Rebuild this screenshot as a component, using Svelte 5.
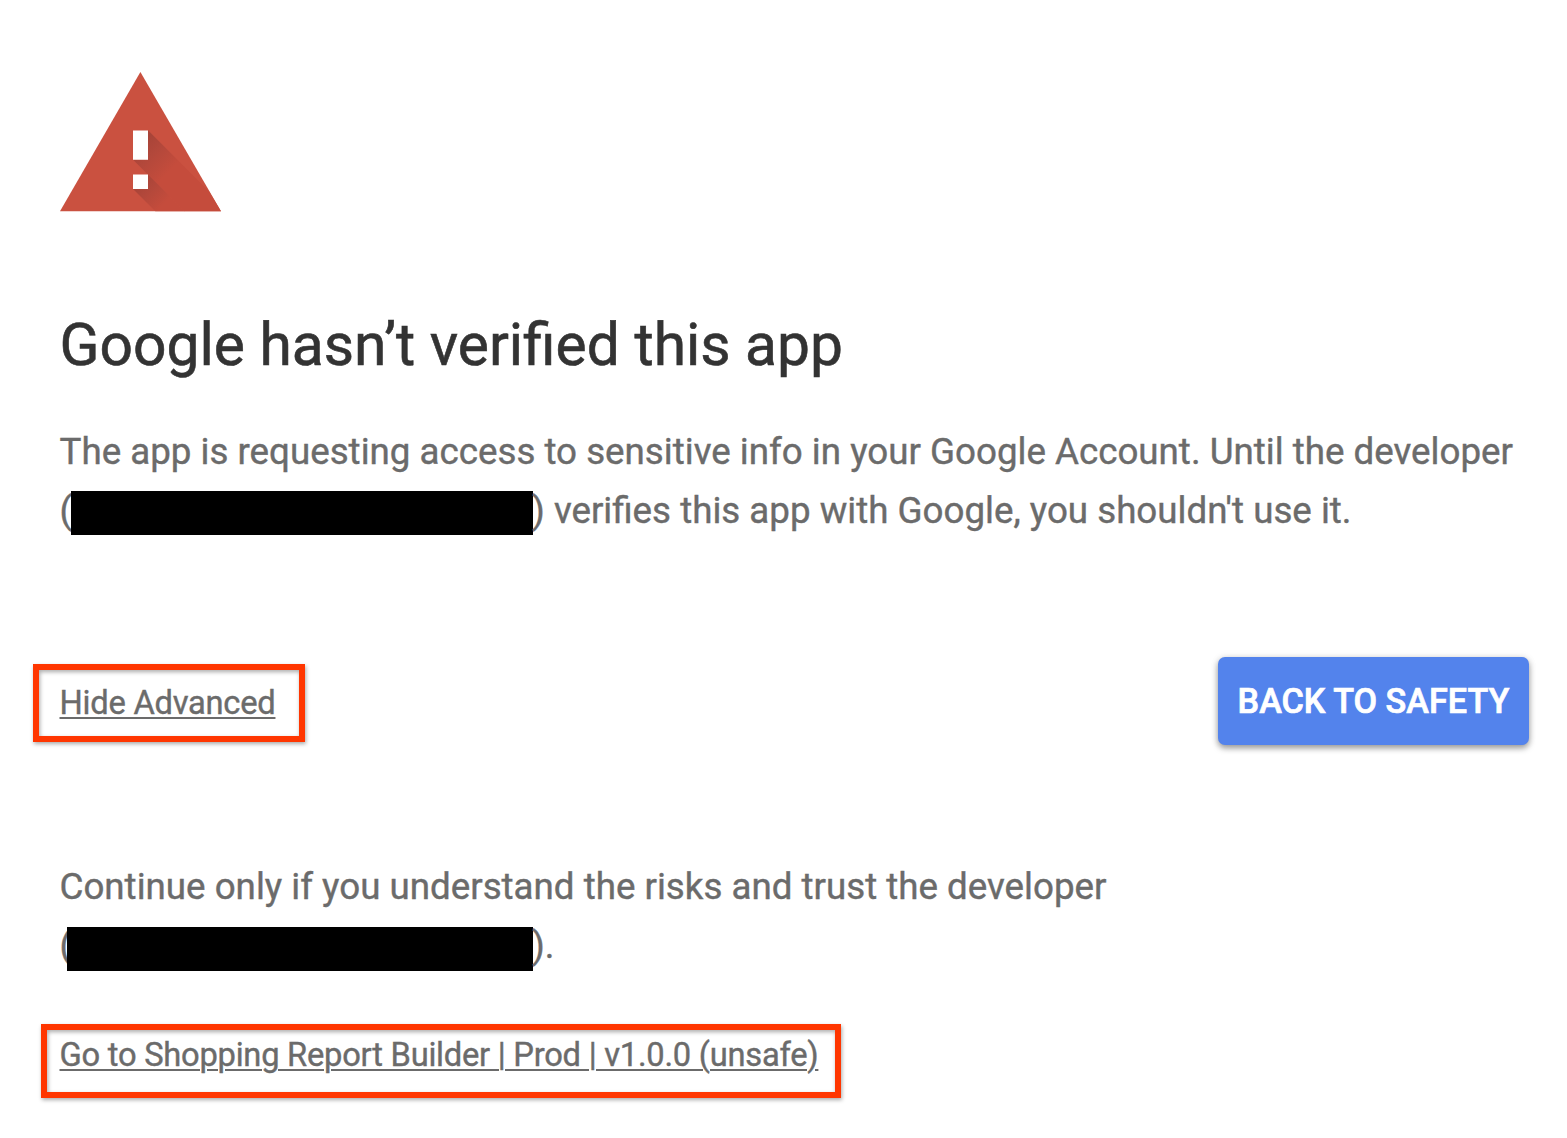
<script>
  const title = 'Google hasn’t verified this app';
</script>

<main>
  <svg class="warning" viewBox="0 0 162 140" aria-label="Warning">
    <defs>
      <linearGradient id="bar-shade" gradientUnits="userSpaceOnUse" x1="80" y1="73" x2="108" y2="101">
        <stop offset="0" stop-color="#a84438" />
        <stop offset=".4" stop-color="#b3483b" />
        <stop offset="1" stop-color="#c54c3c" />
      </linearGradient>
      <linearGradient id="dot-shade" gradientUnits="userSpaceOnUse" x1="80" y1="110" x2="103" y2="133">
        <stop offset="0" stop-color="#a84438" />
        <stop offset=".4" stop-color="#b3483b" />
        <stop offset="1" stop-color="#c54c3c" />
      </linearGradient>
    </defs>
    <path fill="#ca5140" d="M80.4 0 161 139.3H0Z" />
    <path fill="url(#bar-shade)" d="M88 58.3 149 119.3 161 139.3H124.6L73 87.7H88Z" />
    <path fill="url(#dot-shade)" d="M88 102.4 124.9 139.3H95.3L73 117H88Z" />
    <path fill="#fff" d="M73 58.4h15v29.3H73zM73 102.4h15v14.6H73z" />
  </svg>

  <h1>{title}</h1>

  <p class="intro"><span class="line">The app is requesting access to sensitive info in your Google Account. Until the developer</span><span class="line">(<span class="redacted first"></span>) verifies this app with Google, you shouldn't use it.</span></p>

  <div class="actions">
    <div class="marked toggle"><a href="#advanced">Hide Advanced</a></div>
    <button>BACK TO SAFETY</button>
  </div>

  <p class="risk"><span class="line">Continue only if you understand the risks and trust the developer</span><span class="line">(<span class="redacted second"></span>).</span></p>

  <div class="marked proceed"><a href="#proceed">Go to Shopping Report Builder | Prod | v1.0.0 (unsafe)</a></div>
</main>

<style>
  :global(body) { background: #fff; }
  main { box-sizing: border-box; width: 1567px; height: 1138px; padding: 72px 38px 0 59.5px; overflow: hidden; font-family: Roboto, sans-serif; color: #6b6b6b; -webkit-text-stroke: 0.4px currentColor; }
  .warning { display: block; width: 162px; height: 140px; }
  h1 { margin: 98px 0 0; font-size: 58.72px; line-height: 71px; font-weight: 400; color: #333; white-space: nowrap; -webkit-text-stroke-width: 0.6px; }
  p { margin: 0; font-size: 36.72px; line-height: 59px; }
  .line { display: flex; align-items: center; height: 59px; white-space: pre; }
  .intro { margin-top: 41px; }
  .redacted { height: 44px; background: #000; flex: none; }
  .first { width: 462px; margin: 5px -1px 0 -1.1px; }
  .second { width: 466px; margin: 7px -1px 0 -5.1px; }
  .actions { display: flex; justify-content: space-between; align-items: flex-start; margin-top: 117px; }
  .marked { box-sizing: border-box; border: 6px solid #ff3600; box-shadow: 1px 2px 4px #0005, inset 1px 2px 4px #0005; white-space: nowrap; }
  .toggle { width: 272px; height: 78px; margin: 7px 0 0 -26.5px; padding: 13px 0 0 20.5px; }
  a { color: inherit; font-size: 32.7px; letter-spacing: -0.25px; line-height: 40px; text-decoration-thickness: 2.4px; text-underline-offset: 2.5px; }
  button { width: 311px; height: 88px; padding: 0; border: 0; border-radius: 7px; color: #fff; background: #5383ec; font: 500 34.2px Roboto, sans-serif; white-space: nowrap; box-shadow: 0 3px 6px #0006, 0 0 10px #0001; -webkit-text-stroke: 0.7px #fff; }
  .risk { margin-top: 112px; }
  .proceed { width: 800px; height: 74px; margin: 49px 0 0 -18.5px; padding: 5px 0 0 12.5px; }
</style>
